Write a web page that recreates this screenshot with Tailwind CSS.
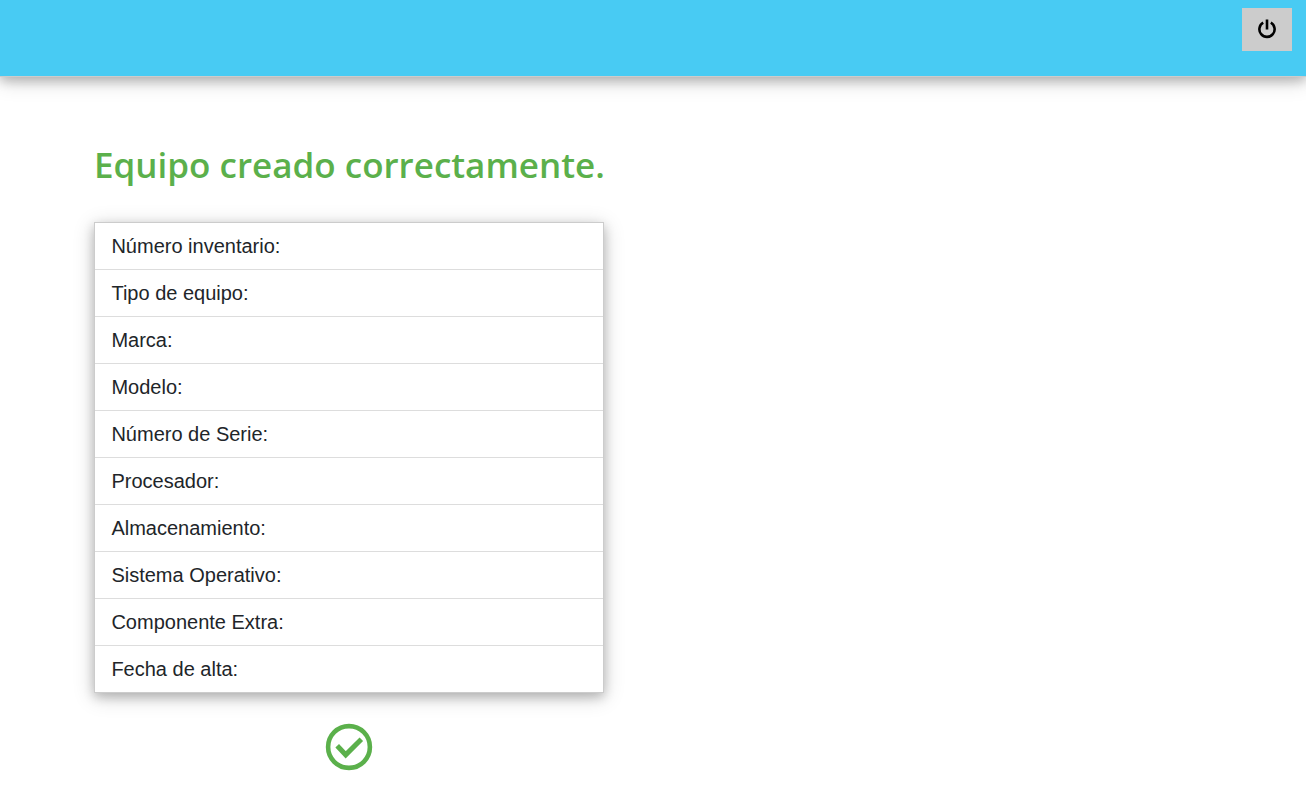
<!DOCTYPE html>
<html lang="es">
<head>
<meta charset="utf-8">
<meta name="viewport" content="width=device-width, initial-scale=1">
<title>Equipo creado</title>
<script src="https://cdn.jsdelivr.net/npm/@tailwindcss/browser@4"></script>
</head>
<body class="bg-white font-['Liberation_Sans',Arial,sans-serif] text-[#212529]">
<header class="flex h-[77px] items-start justify-end border-b border-[#ccc] bg-[#48cbf3] px-3.5 py-2 shadow-[0_4px_10px_0_rgba(0,0,0,0.2),0_4px_20px_0_rgba(0,0,0,0.19)]">
  <button type="button" aria-label="Cerrar sesión" class="flex h-[43px] w-[50px] items-center justify-center bg-[#ccc] pb-0.5 text-black">
    <svg class="size-5" viewBox="0 0 20 20" fill="none" stroke="currentColor" stroke-width="2.6" aria-hidden="true">
      <path d="M6.2 3.7A7.6 7.6 0 1 0 13.8 3.7M10 .5V10.4"/>
    </svg>
  </button>
</header>
<main class="ml-[94px] flex w-fit flex-col items-center pt-16">
  <h1 class="font-['Segoe_UI','Open_Sans',sans-serif] text-[35px] leading-12 font-semibold whitespace-nowrap text-[#5bb04b]">Equipo creado correctamente.</h1>
  <ul class="mt-[33px] w-[510px] divide-y divide-[#ddd] border border-[#ccc] bg-white text-xl leading-[30px] shadow-[0_4px_10px_0_rgba(0,0,0,0.2),0_4px_20px_0_rgba(0,0,0,0.19)]">
    <li class="px-4 py-2">Número inventario:</li>
    <li class="px-4 py-2">Tipo de equipo:</li>
    <li class="px-4 py-2">Marca:</li>
    <li class="px-4 py-2">Modelo:</li>
    <li class="px-4 py-2">Número de Serie:</li>
    <li class="px-4 py-2">Procesador:</li>
    <li class="px-4 py-2">Almacenamiento:</li>
    <li class="px-4 py-2">Sistema Operativo:</li>
    <li class="px-4 py-2">Componente Extra:</li>
    <li class="px-4 py-2">Fecha de alta:</li>
  </ul>
  <svg class="mt-[30px] size-12 text-[#5bb04b]" viewBox="0 0 48 48" fill="none" stroke="currentColor" role="img" aria-label="Correcto">
    <circle cx="24" cy="24" r="20.9" stroke-width="4.6"/>
    <path d="M12.2 22.8L20.7 31.8L36.3 16.2" stroke-width="5"/>
  </svg>
</main>
</body>
</html>
